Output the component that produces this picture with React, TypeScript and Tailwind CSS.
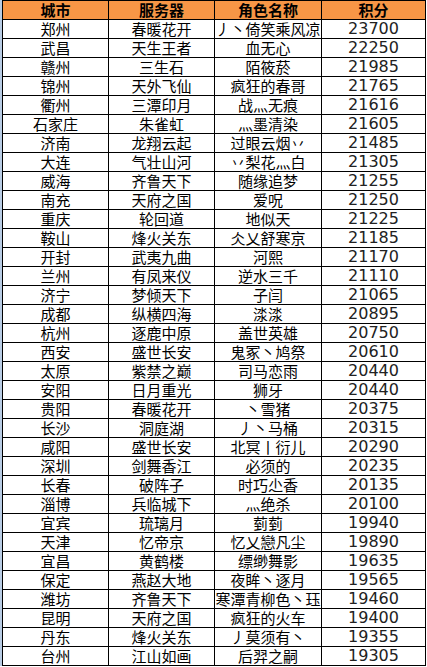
const rows: [string, string, string, string][] = [
  ["郑州", "春暖花开", "丿丶倚笑乘风凉", "23700"],
  ["武昌", "天生王者", "血无心", "22250"],
  ["赣州", "三生石", "陌筱菸", "21985"],
  ["锦州", "天外飞仙", "疯狂的春哥", "21765"],
  ["衢州", "三潭印月", "战灬无痕", "21616"],
  ["石家庄", "朱雀虹", "灬墨清染", "21605"],
  ["济南", "龙翔云起", "过眼云烟丷", "21485"],
  ["大连", "气壮山河", "丷梨花灬白", "21305"],
  ["威海", "齐鲁天下", "随缘追梦", "21255"],
  ["南充", "天府之国", "爱呪", "21250"],
  ["重庆", "轮回道", "地似天", "21225"],
  ["鞍山", "烽火关东", "仌乂舒寒京", "21185"],
  ["开封", "武夷九曲", "河熙", "21170"],
  ["兰州", "有凤来仪", "逆水三千", "21110"],
  ["济宁", "梦倾天下", "子闫", "21065"],
  ["成都", "纵横四海", "渁渁", "20895"],
  ["杭州", "逐鹿中原", "盖世英雄", "20750"],
  ["西安", "盛世长安", "鬼冢丶鸠祭", "20610"],
  ["太原", "紫禁之巅", "司马恋雨", "20440"],
  ["安阳", "日月重光", "狮牙", "20440"],
  ["贵阳", "春暖花开", "丶雪猪", "20375"],
  ["长沙", "洞庭湖", "丿丶马桶", "20315"],
  ["咸阳", "盛世长安", "北冥丨衍儿", "20290"],
  ["深圳", "剑舞香江", "必须的", "20235"],
  ["长春", "破阵子", "时巧尐香", "20135"],
  ["淄博", "兵临城下", "灬绝杀", "20100"],
  ["宜宾", "琉璃月", "菿菿", "19940"],
  ["天津", "忆帝京", "忆乂戀凡尘", "19890"],
  ["宜昌", "黄鹤楼", "缥缈舞影", "19635"],
  ["保定", "燕赵大地", "夜眸丶逐月", "19565"],
  ["潍坊", "齐鲁天下", "寒潭青柳色丶珏", "19460"],
  ["昆明", "天府之国", "疯狂的火车", "19400"],
  ["丹东", "烽火关东", "丿莫须有丶", "19355"],
  ["台州", "江山如画", "后羿之嗣", "19305"],
];

const cjk = "font-['SimSun','Noto_Sans_CJK_SC',sans-serif]";
const num = "font-['DejaVu_Sans','Verdana',sans-serif]";

export default function App() {
  return (
    <div className="h-[667px] w-[427px] overflow-hidden bg-white">
      <div className="w-[425px] border-l-2 border-[#b8cce4]">
        <table className="w-[423px] table-fixed border-collapse text-black">
          <colgroup>
            <col className="w-[106px]" />
            <col className="w-[106px]" />
            <col className="w-[107px]" />
            <col className="w-[104px]" />
          </colgroup>
          <thead>
            <tr className="h-[19px] bg-[#f79646]">
              {["城市", "服务器", "角色名称", "积分"].map((h) => (
                <th
                  key={h}
                  className={`${cjk} border border-black p-0 text-center text-[15px] font-bold leading-[18px]`}
                >
                  {h}
                </th>
              ))}
            </tr>
          </thead>
          <tbody>
            {rows.map(([city, server, name, score]) => (
              <tr key={city + score} className="h-[19px]">
                <td className={`${cjk} border border-black p-0 text-center text-[15px] leading-[18px] whitespace-nowrap`}>{city}</td>
                <td className={`${cjk} border border-black p-0 text-center text-[15px] leading-[18px] whitespace-nowrap`}>{server}</td>
                <td className={`${cjk} overflow-hidden border border-black p-0 text-center text-[15px] leading-[18px] whitespace-nowrap`}>{name}</td>
                <td className={`${num} border border-black p-0 text-center text-[16px] leading-[18px] text-[#222]`}>{score}</td>
              </tr>
            ))}
          </tbody>
        </table>
      </div>
    </div>
  );
}
